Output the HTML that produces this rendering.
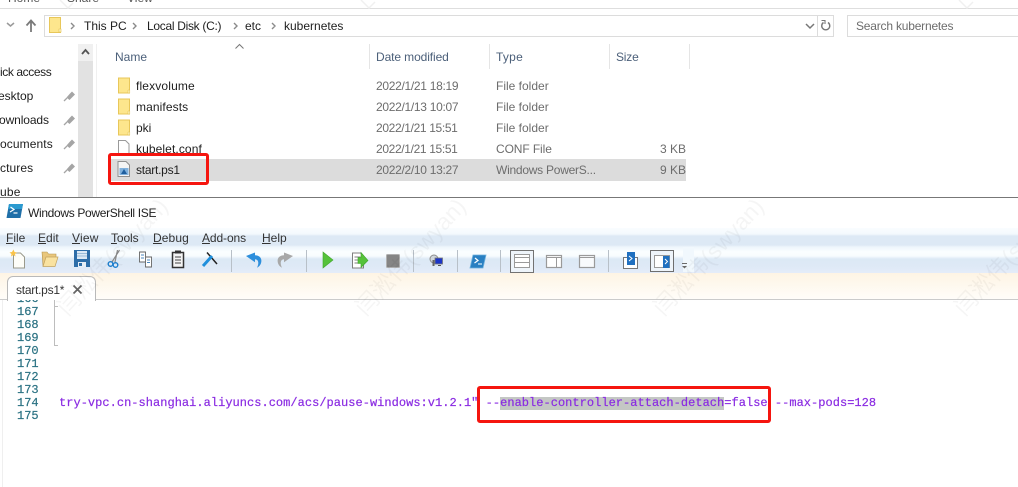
<!DOCTYPE html>
<html><head><meta charset="utf-8">
<style>
html,body{margin:0;padding:0;background:#fff}
#p{position:relative;width:1018px;height:487px;overflow:hidden;background:#fff;font-family:"Liberation Sans","Noto Sans CJK SC",sans-serif;font-size:12px;color:#1e1e1e}
.t{position:absolute;white-space:pre;line-height:14px}
.g{color:#6d6d6d}
.h{color:#4c607a}
.b{position:absolute}
.n{position:absolute;left:17px;font:12px/13px "Liberation Mono",monospace;color:#2b7283;-webkit-text-stroke:.2px #2b7283}
.wm{position:absolute;font-size:23px;color:#000;opacity:.035;transform:rotate(-47deg);transform-origin:0 50%;white-space:nowrap}
</style></head><body><div id="p">

<!-- Explorer -->
<div class="b" style="left:0;top:8px;width:1018px;height:1px;background:#dedede"></div>
<div class="t" style="left:8px;top:-9px;color:#555">Home</div>
<div class="t" style="left:67px;top:-9px;color:#555">Share</div>
<div class="t" style="left:127px;top:-9px;color:#555">View</div>

<!-- address bar -->
<div class="b" style="left:44px;top:15px;width:788px;height:20px;border:1px solid #dcdcdc"></div>
<div class="b" style="left:817px;top:16px;width:1px;height:20px;background:#dcdcdc"></div>
<div class="b" style="left:847px;top:15px;width:175px;height:20px;border:1px solid #dcdcdc"></div>
<svg class="b" style="left:0;top:0" width="1018" height="40">
  <path d="M7 23l3.500 3 3.500-3" fill="none" stroke="#9a9a9a" stroke-width="1.500"/>
  <path d="M31 32V21M26.500 25.500l4.500-5 4.500 5" fill="none" stroke="#7a7a7a" stroke-width="1.800"/>
  <path d="M49.500 17.500h11v15h-11z" fill="#fde68d" stroke="#e8c75a"/>
  <path d="M59 29h2v3h-2z" fill="#fff6cc" stroke="#e0bf50" stroke-width=".6"/>
  <path d="M71 23l3 3-3 3M133 23l3 3-3 3M234 23l3 3-3 3M272 23l3 3-3 3" fill="none" stroke="#8a8a8a" stroke-width="1.400"/>
  <path d="M806 24l4 4 4-4" fill="none" stroke="#777" stroke-width="1.500"/>
  <path d="M823.500 22.500a4 4 0 1 0 4.500 0" fill="none" stroke="#777" stroke-width="1.400"/>
  <path d="M821.500 20.500h3.500V24" fill="none" stroke="#777" stroke-width="1.100"/>
</svg>
<div class="t" style="left:84px;top:19px">This PC</div>
<div class="t" style="left:147px;top:19px;letter-spacing:-.3px">Local Disk (C:)</div>
<div class="t" style="left:245px;top:19px">etc</div>
<div class="t" style="left:284px;top:19px">kubernetes</div>
<div class="t g" style="left:856px;top:19px;letter-spacing:-.2px">Search kubernetes</div>

<!-- nav pane -->
<div class="b" style="left:78px;top:44px;width:15px;height:153px;background:#e2e2e2"></div>
<div class="b" style="left:78px;top:44px;width:15px;height:17px;background:#f0f0f0"></div>
<div class="b" style="left:96px;top:44px;width:1px;height:153px;background:#f0f0f0"></div>
<svg class="b" style="left:78px;top:44px" width="15" height="17"><path d="M4 10l3.500-4 3.500 4" fill="none" stroke="#555" stroke-width="1.800"/></svg>
<div class="t" style="left:0;top:65px;letter-spacing:-.4px">ick access</div>
<div class="t" style="left:-2px;top:89px">esktop</div>
<div class="t" style="left:-1px;top:113px;letter-spacing:-.1px">ownloads</div>
<div class="t" style="left:0;top:137px;letter-spacing:.1px">ocuments</div>
<div class="t" style="left:0;top:161px;letter-spacing:.1px">ctures</div>
<div class="t" style="left:0;top:185px;letter-spacing:.2px">ube</div>
<svg class="b" style="left:63px;top:90px" width="14" height="90">
  <g id="pin"><path d="M3.500 7.500L7 3.500 9 1.500l3 3-2 2-3.500 3.500-3-2.500z" fill="#a5a5a5"/><path d="M4 8l-3 3" stroke="#a5a5a5" stroke-width="1.300"/></g>
  <use href="#pin" y="24"/><use href="#pin" y="48"/><use href="#pin" y="72"/>
</svg>

<!-- header -->
<svg class="b" style="left:234px;top:43px" width="12" height="8"><path d="M1.500 5.500l4-4 4 4" fill="none" stroke="#777"/></svg>
<div class="t h" style="left:115px;top:50px">Name</div>
<div class="t h" style="left:376px;top:50px;letter-spacing:-.1px">Date modified</div>
<div class="t h" style="left:496px;top:50px;letter-spacing:.25px">Type</div>
<div class="t h" style="left:616px;top:50px;letter-spacing:-.2px">Size</div>
<div class="b" style="left:369px;top:44px;width:1px;height:25px;background:#e5e5e5"></div>
<div class="b" style="left:489px;top:44px;width:1px;height:25px;background:#e5e5e5"></div>
<div class="b" style="left:609px;top:44px;width:1px;height:25px;background:#e5e5e5"></div>
<div class="b" style="left:689px;top:44px;width:1px;height:25px;background:#e5e5e5"></div>

<!-- selection row -->
<div class="b" style="left:111px;top:159px;width:575px;height:22px;background:#dcdcdc"></div>

<!-- file icons -->
<svg class="b" style="left:110px;top:70px" width="30" height="115">
  <g id="fo"><path d="M8.500 8h11v15h-11z" fill="#fde68d" stroke="#e8c75a"/><path d="M18 20h1.800v3H18z" fill="#fff4c0" stroke="#e0bf50" stroke-width=".5"/></g>
  <use href="#fo" y="21"/><use href="#fo" y="42"/>
  <path d="M8.500 70.500h7l3.500 3.500v11.500H8.500z" fill="#fff" stroke="#9a9a9a"/>
  <path d="M8 91.500h8l3.500 3.500v11.500H8z" fill="#f4f4f4" stroke="#8f8f8f"/>
  <path d="M9.500 98h9v7h-9z" fill="#7fb0dc"/><path d="M11 104l3-5 3 5z" fill="#1f5e9e"/>
</svg>
<div class="t" style="left:136px;top:79px;letter-spacing:.15px">flexvolume</div>
<div class="t" style="left:136px;top:100px;letter-spacing:.1px">manifests</div>
<div class="t" style="left:136px;top:121px">pki</div>
<div class="t" style="left:136px;top:142px;letter-spacing:.1px">kubelet.conf</div>
<div class="t" style="left:136px;top:163px;letter-spacing:-.25px">start.ps1</div>

<div class="t g" style="left:376px;top:79px;letter-spacing:-.3px">2022/1/21 18:19</div>
<div class="t g" style="left:376px;top:100px;letter-spacing:-.3px">2022/1/13 10:07</div>
<div class="t g" style="left:376px;top:121px;letter-spacing:-.35px">2022/1/21 15:51</div>
<div class="t g" style="left:376px;top:142px;letter-spacing:-.35px">2022/1/21 15:51</div>
<div class="t g" style="left:376px;top:163px;letter-spacing:-.3px">2022/2/10 13:27</div>
<div class="t g" style="left:496px;top:79px">File folder</div>
<div class="t g" style="left:496px;top:100px">File folder</div>
<div class="t g" style="left:496px;top:121px">File folder</div>
<div class="t g" style="left:496px;top:142px;letter-spacing:-.1px">CONF File</div>
<div class="t g" style="left:496px;top:163px;letter-spacing:-.25px">Windows PowerS...</div>
<div class="t g" style="left:660px;top:142px">3 KB</div>
<div class="t g" style="left:660px;top:163px">9 KB</div>

<!-- red box 1 -->
<div class="b" style="left:108px;top:153px;width:95px;height:26px;border:3px solid #f5150f;border-radius:3px"></div>

<!-- ISE window -->
<div class="b" style="left:0;top:197px;width:1018px;height:1px;background:#777"></div>
<svg class="b" style="left:6px;top:203px" width="18" height="16">
  <path d="M3 1h14l-2.500 14H.5z" fill="#1f6fa8"/><path d="M3 1h14l-1 5H2z" fill="#2b9ad0"/>
  <path d="M4.500 4l3.500 2.500-4 2.500" fill="none" stroke="#fff" stroke-width="1.200"/><path d="M7.500 10h4" stroke="#fff" stroke-width="1.200"/>
</svg>
<div class="t" style="left:28px;top:206px;letter-spacing:-.33px">Windows PowerShell ISE</div>

<!-- bands -->
<div class="b" style="left:0;top:228px;width:1018px;height:45px;background:linear-gradient(#fafdff 0,#f3f9fd 6px,#dde9f5 8px,#dde9f5 17px,#eef6fc 19px,#fbfeff 24px,#f8fcfe 28px,#dce9f5 31px,#dee9f6 38px,#e4ecf9 45px)"></div>
<div class="b" style="left:0;top:273px;width:1018px;height:26px;background:linear-gradient(#fef4e4,#fffdf9)"></div>
<div class="b" style="left:0;top:299px;width:1018px;height:1px;background:#cbcbcb"></div>
<div class="b" style="left:683px;top:247px;width:11px;height:25px;background:#f1f8fd"></div>

<!-- menu -->
<div class="t" style="left:6px;top:231px;color:#333"><u>F</u>ile</div>
<div class="t" style="left:38px;top:231px;color:#333"><u>E</u>dit</div>
<div class="t" style="left:72px;top:231px;color:#333;letter-spacing:.2px"><u>V</u>iew</div>
<div class="t" style="left:111px;top:231px;color:#333;letter-spacing:-.1px"><u>T</u>ools</div>
<div class="t" style="left:153px;top:231px;color:#333;letter-spacing:.1px"><u>D</u>ebug</div>
<div class="t" style="left:202px;top:231px;color:#333;letter-spacing:-.1px"><u>A</u>dd-ons</div>
<div class="t" style="left:262px;top:231px;color:#333"><u>H</u>elp</div>

<!-- toolbar icons -->
<svg class="b" style="left:0;top:240px" width="700" height="34">
  <!-- new -->
  <path d="M13.500 13h7l4 4v11h-11z" fill="#fdfdf8" stroke="#9a9a8c"/>
  <path d="M13.500 9.500l1 2.500 2.500.5-2 1.500.5 2.500-2-1.500-2.500 1.500.5-2.500-2-1.500 2.500-.5z" fill="#f9c34a"/>
  <!-- open -->
  <path d="M43 26l-1-14h5l1.500 2H56v3z" fill="#e9c77c" stroke="#b59550" stroke-width=".6"/>
  <path d="M43 26.500l3-9.500h12l-3 9.500z" fill="#f9e2a0" stroke="#c2a25f" stroke-width=".7"/>
  <!-- save -->
  <rect x="74" y="10" width="16" height="17" fill="#2d6da8"/><rect x="77" y="11" width="10" height="8" fill="#dbe8f4"/><path d="M77 13.500h10M77 16h10" stroke="#9bbbd8"/><rect x="78" y="22" width="8" height="5" fill="#e6eef6"/><rect x="79" y="23" width="3" height="3" fill="#2d6da8"/>
  <!-- cut -->
  <path d="M119.500 10l-7.500 12M117.500 10l-2.500 12" stroke="#8a8a8a" stroke-width="1.200" fill="none"/>
  <circle cx="110.500" cy="24" r="2.300" fill="none" stroke="#1e80d0" stroke-width="1.400"/><circle cx="115.500" cy="25" r="2.300" fill="none" stroke="#1e80d0" stroke-width="1.400"/>
  <!-- copy -->
  <path d="M139.500 12h6v10h-6zM145.500 17h6v10h-6z" fill="#fff" stroke="#666" stroke-width=".9"/><path d="M141 15h3M141 18h3M147 20h3M147 22.500h3" stroke="#4b87bd"/>
  <!-- paste -->
  <rect x="172.500" y="12.500" width="11" height="15" fill="#f4f4f4" stroke="#333" stroke-width="1.500"/><rect x="175" y="10.500" width="6" height="3" fill="#333"/><path d="M175 17h6M175 20h6M175 23h6" stroke="#444"/>
  <!-- clear -->
  <path d="M207 12.500l10 11.500" stroke="#222" stroke-width="1.500"/><path d="M203 26l9-10" stroke="#1f8fdc" stroke-width="3"/>
  <!-- separators -->
  <path d="M231.500 10v22M306.500 10v22M413.500 10v22M457.500 10v22M500.500 10v22M608.500 10v22" stroke="#b8c0c8"/>
  <!-- undo -->
  <path d="M246 16l9-3.500v2.700c4.500 0 7.500 3 6 8-.7 2-2 3.500-4 4.500 1-2 1.700-4.500 1-6.500-.6-1.500-1.700-2-3-2v3z" fill="#2e8fdc"/>
  <!-- redo -->
  <path d="M293 16l-9-3.500v2.700c-4.500 0-7.500 3-6 8 .7 2 2 3.500 4 4.500-1-2-1.700-4.500-1-6.500.6-1.500 1.700-2 3-2v3z" fill="#a8a8a8"/>
  <!-- run -->
  <path d="M323 12l10 8-10 8z" fill="#55c23a" stroke="#3fa62a" stroke-width=".6"/>
  <!-- run sel -->
  <path d="M352.500 13h8l3 3v12h-11z" fill="#fff" stroke="#7f7f7f"/><path d="M354.500 17h6M354.500 20h6M354.500 23h6" stroke="#7f7f7f"/>
  <path d="M361 14l7 8-7 7v-4h-3v-6h3z" fill="#55c23a" stroke="#3fa62a" stroke-width=".6" transform="translate(0 -1.500)"/>
  <!-- stop -->
  <rect x="386.500" y="14.500" width="13" height="13" rx="1" fill="#858585" stroke="#b0b0b0"/>
  <!-- remote -->
  <circle cx="434" cy="19" r="4" fill="#cfd6dc" stroke="#8d8d8d"/><rect x="432.500" y="20" width="2" height="6" fill="#666"/>
  <rect x="435" y="18" width="7.500" height="6" fill="#1b35c8" stroke="#777" stroke-width=".8"/><path d="M438 25.500h3" stroke="#555"/>
  <!-- PS -->
  <path d="M473 15h13l-3 13h-13z" fill="#2a80c2" stroke="#6eb1dd" stroke-width=".8"/>
  <path d="M475 18l3 2.500-3.500 2.500" stroke="#fff" fill="none" stroke-width="1.200"/><path d="M478 24h4" stroke="#fff"/>
  <!-- layout buttons -->
  <rect x="510.500" y="10.500" width="23" height="22" fill="#eef4fa" stroke="#727272"/>
  <rect x="514.500" y="14.500" width="15" height="13" fill="#fff" stroke="#9a9a9a"/><path d="M514 17.500h16M514 22.500h16" stroke="#9a9a9a"/>
  <rect x="546.500" y="15.500" width="15" height="12" fill="#fff" stroke="#9a9a9a" stroke-width="1.200"/><path d="M546 17.500h16M556.500 17v10" stroke="#9a9a9a"/>
  <rect x="579.500" y="15.500" width="15" height="12" fill="#f8fafc" stroke="#9a9a9a" stroke-width="1.200"/><path d="M579 17.500h16" stroke="#9a9a9a"/>
  <rect x="623.500" y="17.500" width="14" height="11" fill="#fff" stroke="#777"/>
  <rect x="627" y="12" width="8" height="13" fill="#2070c0"/><path d="M629 16l3 2.500-3 2.500" stroke="#fff" fill="none"/>
  <rect x="650.500" y="10.500" width="23" height="21" fill="#eef4fa" stroke="#6e6e6e"/>
  <rect x="654.500" y="15.500" width="15" height="12" fill="#fff" stroke="#9a9a9a"/><rect x="663" y="16" width="6.500" height="12" fill="#2070c0"/><path d="M665 19l2.500 2.500-2.500 2.500" stroke="#fff" fill="none"/>
  <path d="M682 23.500h5" stroke="#6a6a6a"/><path d="M682 26h5l-2.500 2.500z" fill="#6a6a6a"/>
</svg>

<!-- tab -->
<div class="b" style="left:7px;top:276px;width:89px;height:25px;background:#fff;border:1px solid #b9b9b9;border-bottom:0;border-radius:6px 6px 0 0;box-sizing:border-box"></div>
<div class="t" style="left:16px;top:283px;color:#333;letter-spacing:-.25px">start.ps1*</div>
<svg class="b" style="left:71px;top:283px" width="14" height="14"><path d="M2.500 2.500l8 8M10.500 2.500l-8 8" stroke="#666" stroke-width="1.800"/></svg>
<div class="b" style="left:2px;top:300px;width:1px;height:187px;background:#efefef"></div>
<div class="b" style="left:54px;top:300px;width:1px;height:45px;background:#bdbdbd"></div>
<div class="b" style="left:54px;top:306px;width:4px;height:1px;background:#bdbdbd"></div>
<div class="b" style="left:54px;top:345px;width:4px;height:1px;background:#bdbdbd"></div>

<!-- line numbers -->
<div class="b" style="left:0;top:300px;width:50px;height:187px;overflow:hidden">
<div class="n" style="top:-7px">166</div>
<div class="n" style="top:6px">167</div>
<div class="n" style="top:19px">168</div>
<div class="n" style="top:32px">169</div>
<div class="n" style="top:45px">170</div>
<div class="n" style="top:58px">171</div>
<div class="n" style="top:71px">172</div>
<div class="n" style="top:84px">173</div>
<div class="n" style="top:97px">174</div>
<div class="n" style="top:110px">175</div>
</div>

<!-- code -->
<div class="b" style="left:500px;top:397px;width:224px;height:13px;background:#c4c7c4"></div>
<div class="t" style="left:59px;top:397px;font:12px/13px 'Liberation Mono',monospace;color:#8a2be2;letter-spacing:.03px;-webkit-text-stroke:.2px #8a2be2">try-vpc.cn-shanghai.aliyuncs.com/acs/pause-windows:v1.2.1" --enable-controller-attach-detach=false --max-pods=128</div>
<div class="b" style="left:477px;top:386px;width:288px;height:31px;border:3px solid #f5150f;border-radius:3px"></div>

<!-- watermarks -->
<div class="wm" style="left:60px;top:293px">闫淞伟(swyan)</div>
<div class="wm" style="left:358px;top:293px">闫淞伟(swyan)</div>
<div class="wm" style="left:656px;top:293px">闫淞伟(swyan)</div>
<div class="wm" style="left:957px;top:293px">闫淞伟(swyan)</div>
<svg class="b" style="left:0;top:0" width="1018" height="12"><path d="M60 0l8 8 5-5M361 0l8 8 6-6M959 0l8 8 6-6" fill="none" stroke="#f0f0f0" stroke-width="1.500"/></svg>

</div></body></html>
